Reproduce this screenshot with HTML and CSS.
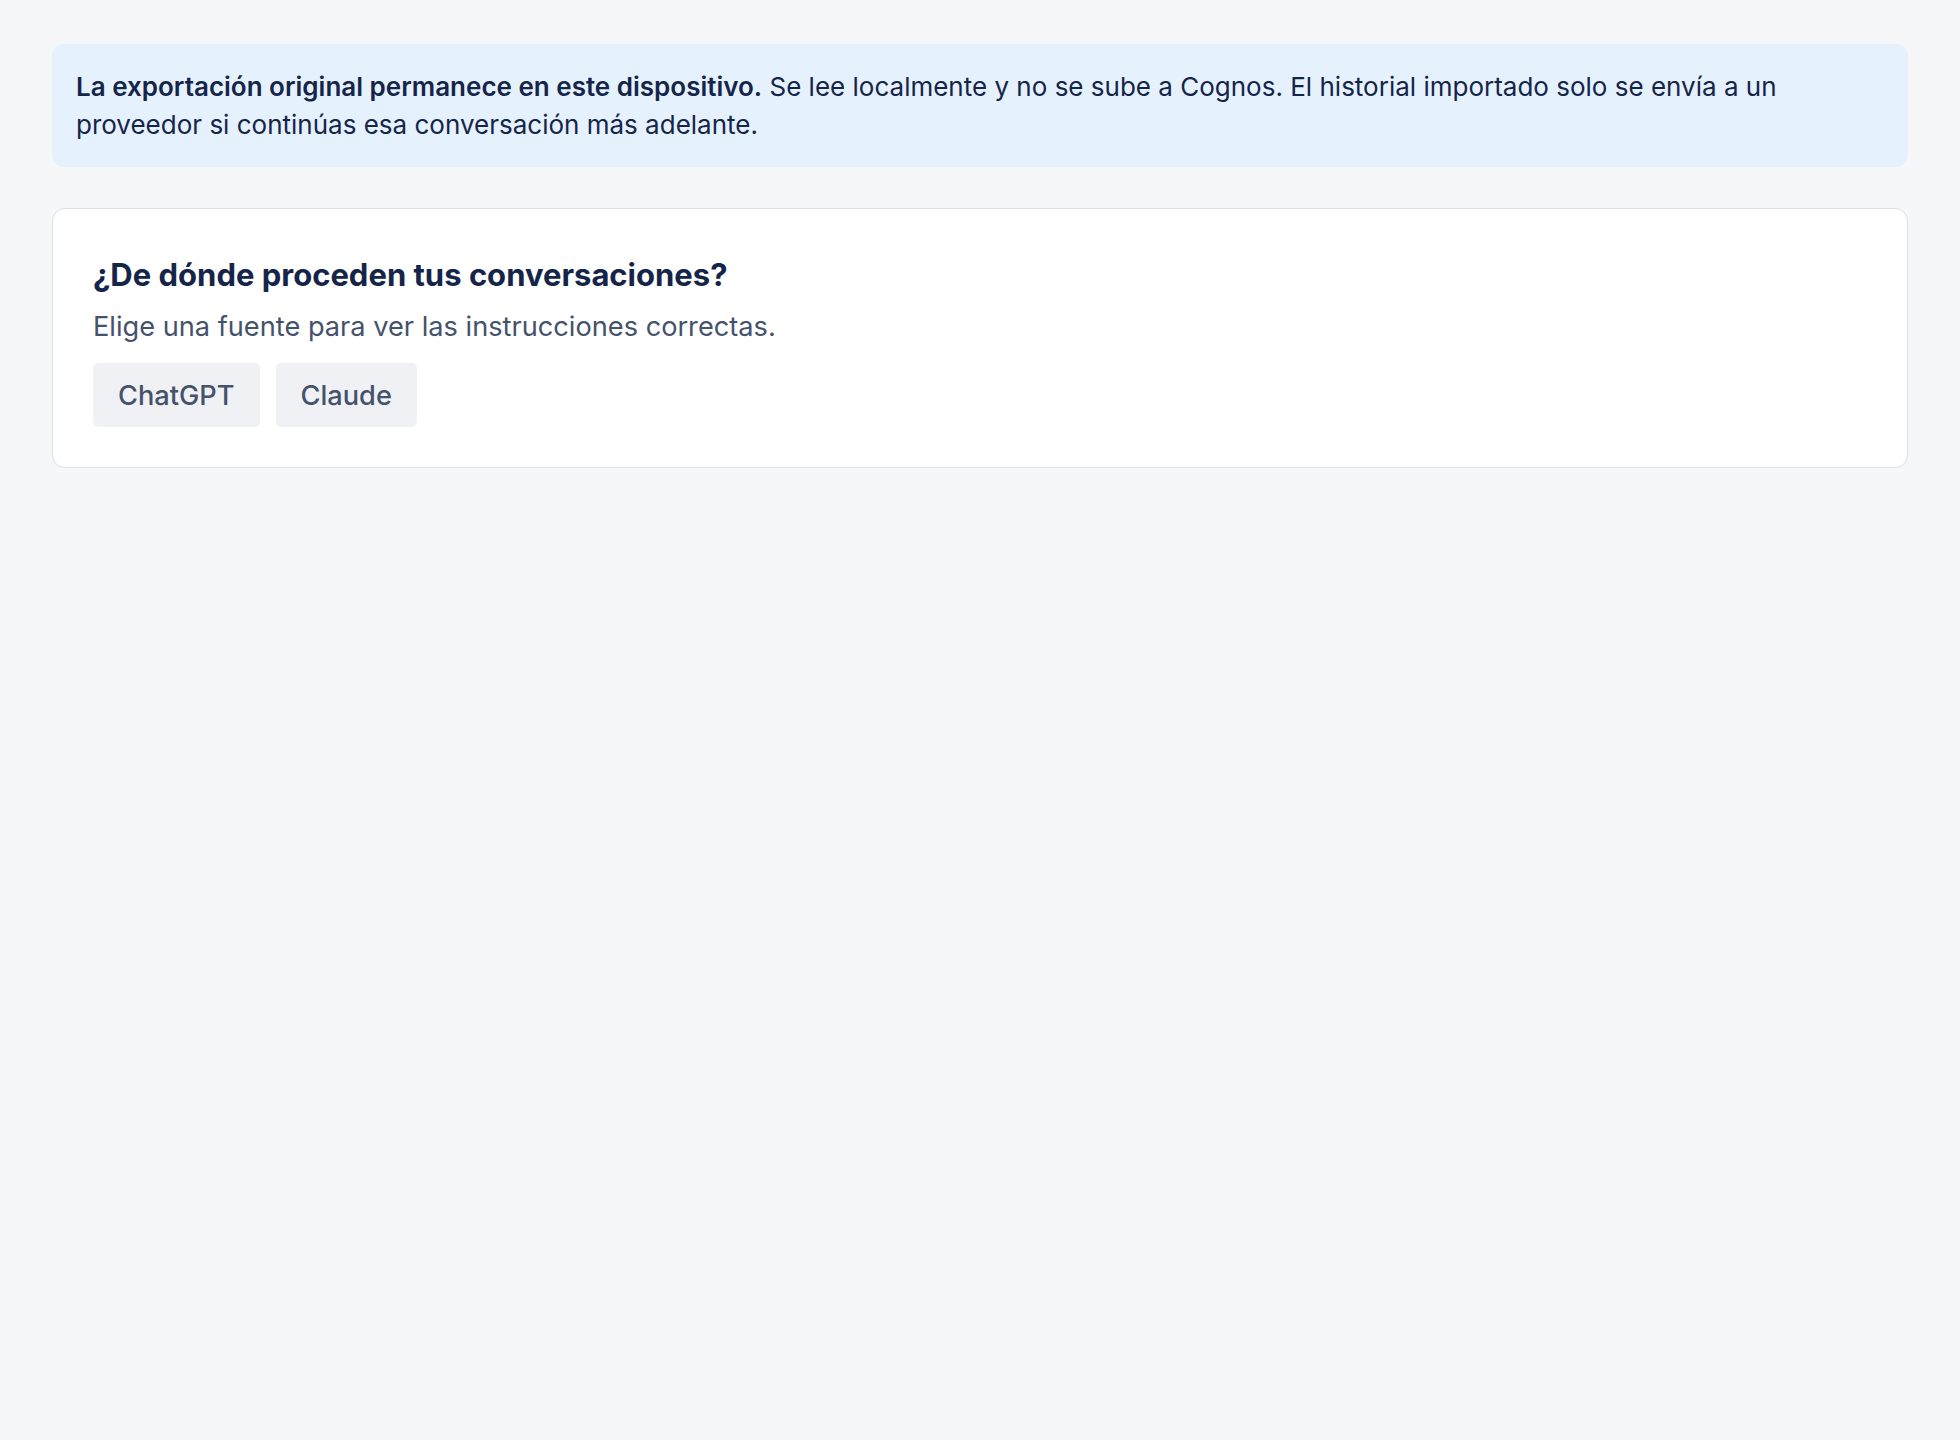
FILE: index.html
```html
<!DOCTYPE html>
<html lang="es">
<head>
  <meta charset="utf-8">
  <link rel="stylesheet" href="styles.css">
</head>
<body>
  <div class="page">
    <div class="notice">
      <strong>La exportación original permanece en este dispositivo.</strong>
      Se lee localmente y no se sube a Cognos. El historial importado solo se envía a un
      proveedor si continúas esa conversación más adelante.
    </div>

    <div class="card">
      <h2>¿De dónde proceden tus conversaciones?</h2>
      <p class="hint">Elige una fuente para ver las instrucciones correctas.</p>
      <div class="sources">
        <button class="source-button">ChatGPT</button>
        <button class="source-button">Claude</button>
      </div>
    </div>
  </div>
</body>
</html>
```

FILE: styles.css
```css
:root {
  --bg: #f6f7f9;
  --card-bg: #ffffff;
  --border: #dde0e5;
  --text: #15254a;
  --text-muted: #45526b;
  --notice-bg: #e6f1fe;
  --button-bg: #f0f1f4;
}

body {
  margin: 0;
  background: var(--bg);
  font-family: Inter, "Noto Sans", sans-serif;
  color: var(--text);
}

.page {
  display: flex;
  flex-direction: column;
  gap: 41px;
  padding: 44px 52px;
}

.notice {
  background: var(--notice-bg);
  border-radius: 12px;
  padding: 24px 24px;
  font-size: 26px;
  line-height: 37.5px;
  color: var(--text);
}

.notice strong {
  font-weight: 600;
}

.card {
  background: var(--card-bg);
  border: 1.5px solid var(--border);
  border-radius: 13px;
  padding: 41px 40px 40px;
}

.card h2 {
  margin: 0;
  font-size: 31px;
  line-height: 50px;
  font-weight: 700;
  color: var(--text);
}

.hint {
  margin: 8px 0 0;
  font-size: 27.2px;
  line-height: 37px;
  color: var(--text-muted);
}

.sources {
  display: flex;
  gap: 16px;
  margin-top: 18px;
}

.source-button {
  background: var(--button-bg);
  border: none;
  border-radius: 5px;
  padding: 0 25px;
  height: 64px;
  font-family: inherit;
  font-size: 27.2px;
  font-weight: 500;
  color: var(--text-muted);
  cursor: pointer;
}

.source-button:hover {
  background: #e6e8ec;
}
```
